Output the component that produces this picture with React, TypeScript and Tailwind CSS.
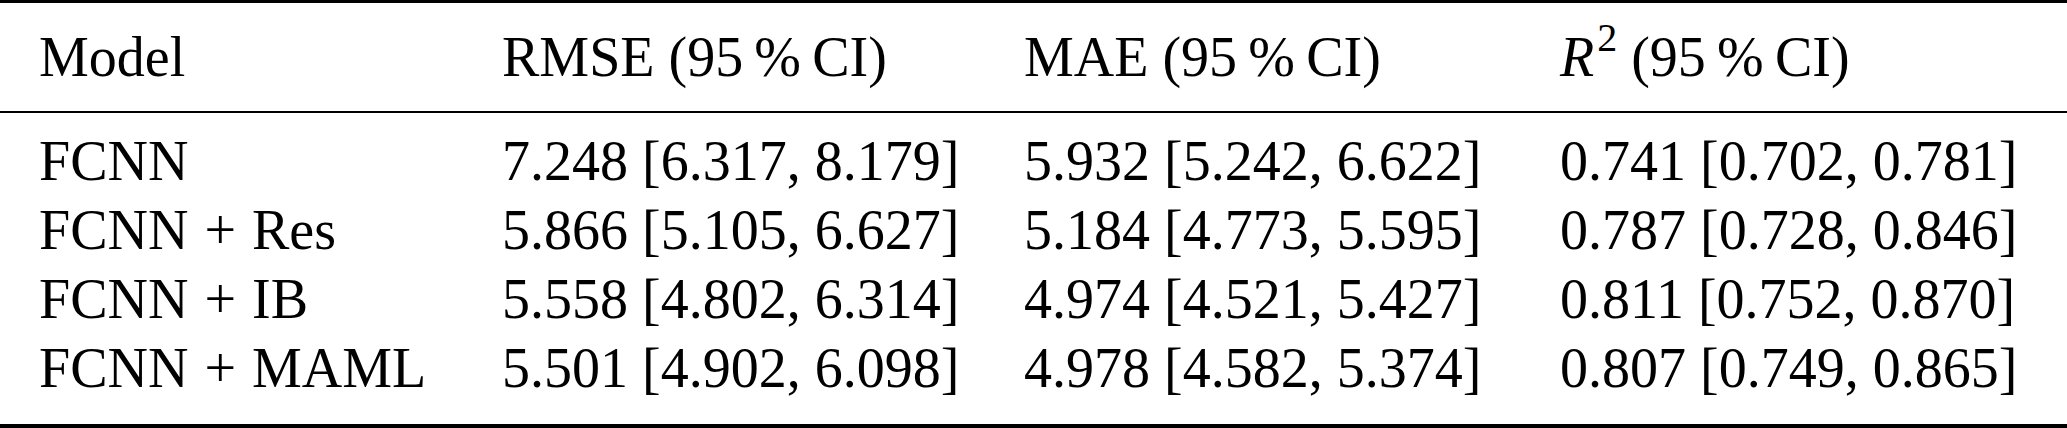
import React from 'react';

const rows = [
  { model: 'FCNN', plus: '', rmse: '7.248 [6.317, 8.179]', mae: '5.932 [5.242, 6.622]', r2: '0.741 [0.702, 0.781]' },
  { model: 'FCNN', plus: 'Res', rmse: '5.866 [5.105, 6.627]', mae: '5.184 [4.773, 5.595]', r2: '0.787 [0.728, 0.846]' },
  { model: 'FCNN', plus: 'IB', rmse: '5.558 [4.802, 6.314]', mae: '4.974 [4.521, 5.427]', r2: '0.811 [0.752, 0.870]' },
  { model: 'FCNN', plus: 'MAML', rmse: '5.501 [4.902, 6.098]', mae: '4.978 [4.582, 5.374]', r2: '0.807 [0.749, 0.865]' },
];

const cols = 'grid grid-cols-[463px_522px_536px_1fr] px-[39px] whitespace-nowrap';

const App: React.FC = () => {
  return (
    <div className="w-[2067px] h-[428px] bg-white text-black font-['Liberation_Serif','Times_New_Roman',serif] text-[56px] leading-[69px]">
      <div className="h-[3px] bg-black" />

      <div className={`${cols} pt-[20px] pb-[19px]`}>
        <div>Model</div>
        <div>RMSE (95&thinsp;%&thinsp;CI)</div>
        <div>MAE (95&thinsp;%&thinsp;CI)</div>
        <div>
          <span className="italic">R</span>
          <sup className="text-[40px] top-[-0.62em] ml-[3px]">2</sup> (95&thinsp;%&thinsp;CI)
        </div>
      </div>

      <div className="h-[2px] bg-black" />

      <div className="pt-[14px] pb-[21px]">
        {rows.map((row) => (
          <div key={row.model + row.plus} className={cols}>
            <div>
              {row.model}
              {row.plus && (
                <>
                  <span className="mx-[16px]">+</span>
                  {row.plus}
                </>
              )}
            </div>
            <div>{row.rmse}</div>
            <div>{row.mae}</div>
            <div>{row.r2}</div>
          </div>
        ))}
      </div>

      <div className="h-[4px] bg-black" />
    </div>
  );
};

export default App;
